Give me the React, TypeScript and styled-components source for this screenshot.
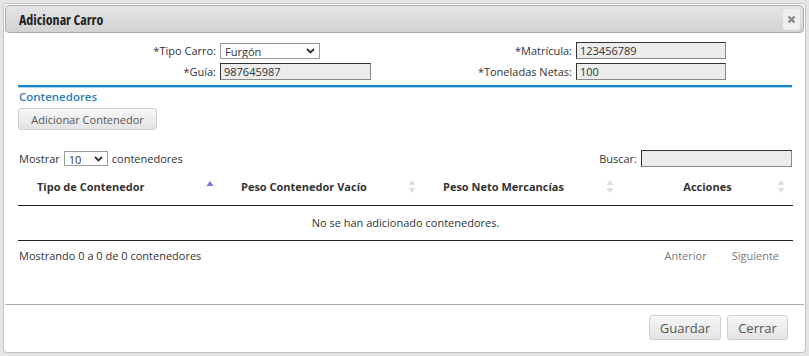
import React from 'react';
import styled, { createGlobalStyle } from 'styled-components';

const GlobalStyle = createGlobalStyle`
  html, body {
    margin: 0;
    padding: 0;
    background: #e4e4e4;
    font-family: 'Open Sans', 'DejaVu Sans', sans-serif;
  }
`;

const Page = styled.div`
  width: 809px;
  height: 356px;
  padding: 3px 3px 0 3px;
  box-sizing: border-box;
`;

const Dialog = styled.div`
  width: 803px;
  height: 350px;
  box-sizing: border-box;
  background: #fff;
  border: 1px solid #c3c3c3;
  border-radius: 4px;
  padding: 1px;
  display: flex;
  flex-direction: column;
`;

const TitleBar = styled.div`
  height: 28px;
  box-sizing: border-box;
  border: 1px solid #adadad;
  border-radius: 4px;
  background: linear-gradient(#e4e4e4, #d3d3d3);
  display: flex;
  align-items: center;
  justify-content: space-between;
  padding: 0 3px 0 13px;
`;

const Title = styled.span`
  font-family: 'Open Sans', 'DejaVu Sans Condensed', sans-serif;
  font-stretch: 75%;
  font-weight: 700;
  font-size: 14px;
  color: #222;
`;

const CloseBtn = styled.button`
  width: 17px;
  height: 21px;
  padding: 0;
  border: none;
  border-radius: 3px;
  background: #efefef;
  display: flex;
  align-items: center;
  justify-content: center;
`;

const Content = styled.div`
  flex: 1;
  padding: 0 12px 0 13px;
  font-size: 11px;
  color: #333;
`;

const FormGrid = styled.div`
  display: grid;
  grid-template-columns: 198px 151px 197px 150px;
  column-gap: 4px;
  row-gap: 4px;
  margin-top: 9px;
  align-items: center;
`;

const Label = styled.label`
  text-align: right;
  color: #333;
`;

const Field = styled.div`
  display: flex;
`;

const TextInput = styled.input<{ $w: number }>`
  width: ${(p) => p.$w}px;
  height: 17px;
  box-sizing: border-box;
  background: #ececec;
  border: 1px solid #8a8a8a;
  border-top-color: #333;
  border-left-color: #333;
  font-family: inherit;
  font-size: 11px;
  color: #333;
  padding: 0 3px;
  margin: 0;
  outline: none;
`;

const SelectWrap = styled.div<{ $w: number; $h: number }>`
  position: relative;
  width: ${(p) => p.$w}px;
  height: ${(p) => p.$h}px;
  display: inline-block;
  vertical-align: middle;
`;

const Select = styled.select`
  appearance: none;
  width: 100%;
  height: 100%;
  box-sizing: border-box;
  border: 1px solid #9a9a9a;
  background: #fff;
  font-family: inherit;
  font-size: 11px;
  color: #333;
  padding: 0 0 0 4px;
  margin: 0;
  outline: none;
`;

const Chevron = styled.svg`
  position: absolute;
  right: 5px;
  top: 5px;
  pointer-events: none;
`;

const Divider = styled.div`
  margin-top: 5px;
  border-top: 2px solid #1587c8;
  box-shadow: 0 1px 0 #a8d4ec;
`;

const SectionTitle = styled.div`
  font-weight: 600;
  font-size: 11.5px;
  color: #2b7db8;
  margin: 2px 0 0 1px;
`;

const GrayButton = styled.button<{ $size?: number }>`
  font-family: inherit;
  font-size: ${(p) => p.$size ?? 11}px;
  color: #555;
  background: linear-gradient(#f7f7f7, #e4e4e4);
  border: 1px solid #cfcfcf;
  border-radius: 3px;
  cursor: pointer;
  padding: 0;
`;

const AddButton = styled(GrayButton)`
  width: 139px;
  height: 22px;
  margin-top: 4px;
`;

const Controls = styled.div`
  display: flex;
  justify-content: space-between;
  align-items: center;
  margin-top: 20px;
  height: 17px;
`;

const Inline = styled.div`
  display: flex;
  align-items: center;
  gap: 4px;
  padding-left: 1px;
`;

const Table = styled.table`
  width: 775px;
  border-collapse: collapse;
  margin-top: 1px;
`;

const Th = styled.th<{ $w: number; $center?: boolean }>`
  width: ${(p) => p.$w}px;
  height: 37px;
  box-sizing: border-box;
  text-align: ${(p) => (p.$center ? 'center' : 'left')};
  padding: 0 18px 0 ${(p) => (p.$center ? 18 : 19)}px;
  font-weight: 700;
  font-size: 11px;
  color: #333;
  border-bottom: 1px solid #222;
  position: relative;
`;

const SortIcon = styled.svg`
  position: absolute;
  right: 8px;
  top: 12px;
`;

const Td = styled.td`
  text-align: center;
  height: 32px;
  border-bottom: 1px solid #222;
  color: #333;
`;

const Footer = styled.div`
  display: flex;
  justify-content: space-between;
  align-items: center;
  margin-top: 7px;
  padding-left: 1px;
`;

const Pager = styled.div`
  display: flex;
  gap: 25px;
  color: #777;
  padding-right: 13px;
`;

const ButtonPane = styled.div`
  border-top: 1px solid #acacac;
  display: flex;
  justify-content: flex-end;
  gap: 6px;
  padding: 10px 16px 11px 0;
`;

const DialogButton = styled(GrayButton)<{ $w: number }>`
  width: ${(p) => p.$w}px;
  height: 25px;
`;

const SortBoth = () => (
  <SortIcon width="8" height="13" viewBox="0 0 8 13">
    <path d="M4 0 L7.5 5 H0.5 Z" fill="#dedede" />
    <path d="M4 13 L7.5 8 H0.5 Z" fill="#dedede" />
  </SortIcon>
);

const SortAsc = () => (
  <SortIcon width="8" height="13" viewBox="0 0 8 13">
    <path d="M4 1 L7.5 6 H0.5 Z" fill="#7777dd" />
  </SortIcon>
);

const Down = () => (
  <Chevron width="9" height="6" viewBox="0 0 9 6">
    <path d="M1 1 L4.5 4.5 L8 1" fill="none" stroke="#333" strokeWidth="1.8" />
  </Chevron>
);

export default function App() {
  return (
    <>
      <GlobalStyle />
      <Page>
        <Dialog>
          <TitleBar>
            <Title>Adicionar Carro</Title>
            <CloseBtn aria-label="Cerrar">
              <svg width="9" height="9" viewBox="0 0 9 9">
                <path d="M1.5 1.5 L7.5 7.5 M7.5 1.5 L1.5 7.5" stroke="#8a8a8a" strokeWidth="2.4" />
              </svg>
            </CloseBtn>
          </TitleBar>
          <Content>
            <FormGrid>
              <Label>*Tipo Carro:</Label>
              <Field>
                <SelectWrap $w={100} $h={16}>
                  <Select defaultValue="Furgón">
                    <option>Furgón</option>
                  </Select>
                  <Down />
                </SelectWrap>
              </Field>
              <Label>*Matrícula:</Label>
              <Field>
                <TextInput $w={150} defaultValue="123456789" />
              </Field>
              <Label>*Guía:</Label>
              <Field>
                <TextInput $w={151} defaultValue="987645987" />
              </Field>
              <Label>*Toneladas Netas:</Label>
              <Field>
                <TextInput $w={150} defaultValue="100" />
              </Field>
            </FormGrid>
            <Divider />
            <SectionTitle>Contenedores</SectionTitle>
            <AddButton>Adicionar Contenedor</AddButton>
            <Controls>
              <Inline>
                Mostrar
                <SelectWrap $w={44} $h={15}>
                  <Select defaultValue="10">
                    <option>10</option>
                  </Select>
                  <Down />
                </SelectWrap>
                contenedores
              </Inline>
              <Inline>
                Buscar:
                <TextInput $w={151} />
              </Inline>
            </Controls>
            <Table>
              <thead>
                <tr>
                  <Th $w={204}>
                    Tipo de Contenedor
                    <SortAsc />
                  </Th>
                  <Th $w={202}>
                    Peso Contenedor Vacío
                    <SortBoth />
                  </Th>
                  <Th $w={198}>
                    Peso Neto Mercancías
                    <SortBoth />
                  </Th>
                  <Th $w={171} $center>
                    Acciones
                    <SortBoth />
                  </Th>
                </tr>
              </thead>
              <tbody>
                <tr>
                  <Td colSpan={4}>No se han adicionado contenedores.</Td>
                </tr>
              </tbody>
            </Table>
            <Footer>
              <span>Mostrando 0 a 0 de 0 contenedores</span>
              <Pager>
                <span>Anterior</span>
                <span>Siguiente</span>
              </Pager>
            </Footer>
          </Content>
          <ButtonPane>
            <DialogButton $w={72} $size={13}>Guardar</DialogButton>
            <DialogButton $w={61} $size={13}>Cerrar</DialogButton>
          </ButtonPane>
        </Dialog>
      </Page>
    </>
  );
}
